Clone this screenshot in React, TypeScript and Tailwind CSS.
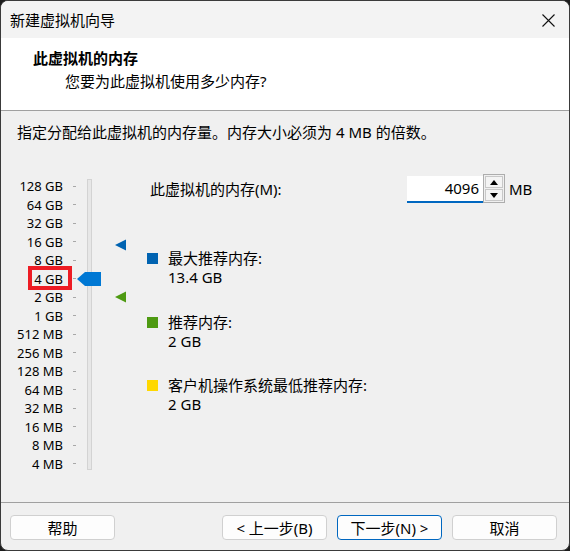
import React from "react";

const labels = [
  "128 GB", "64 GB", "32 GB", "16 GB", "8 GB", "4 GB", "2 GB", "1 GB",
  "512 MB", "256 MB", "128 MB", "64 MB", "32 MB", "16 MB", "8 MB", "4 MB",
];

function Btn({ children, primary }: { children: React.ReactNode; primary?: boolean }) {
  return (
    <div
      className={
        "w-[105px] h-[25px] rounded-[4px] bg-[#fdfdfd] flex items-center justify-center text-[15px] leading-[20px] text-black border " +
        (primary ? "border-[#0067c0]" : "border-[#d0d0d0]")
      }
    >
      {children}
    </div>
  );
}

function LegendItem({ color, title, value }: { color: string; title: string; value: string }) {
  return (
    <div className="flex flex-row">
      <div className="h-[19px] flex items-center">
        <div className={"w-[11px] h-[11px] " + color} />
      </div>
      <div className="ml-[10px] flex flex-col text-[15px] leading-[19px]">
        <span>{title}</span>
        <span>{value}</span>
      </div>
    </div>
  );
}

export default function App() {
  return (
    <div className="w-[570px] h-[551px] bg-[#1c1c1c] font-[family-name:'Noto_Sans','Noto_Sans_CJK_SC',sans-serif] text-black">
      <div className="w-full h-full rounded-[8px] border border-[#3a3a3a] overflow-hidden flex flex-col bg-[#f0f0f0]">
        {/* title bar */}
        <div className="h-[37px] bg-[#f3f3f3] flex items-center justify-between pl-[9px] pr-[14px]">
          <span className="text-[15px] leading-[20px] mt-[1px]">新建虚拟机向导</span>
          <svg width="13" height="13" viewBox="0 0 13 13" className="mt-[1px]">
            <path d="M0.5 0.5 L12.5 12.5 M12.5 0.5 L0.5 12.5" stroke="#111" strokeWidth="1.1" fill="none" />
          </svg>
        </div>
        {/* header */}
        <div className="h-[73px] bg-white border-b border-[#a0a0a0] flex flex-col pt-[10px]">
          <span className="pl-[32px] text-[15px] leading-[20px] font-bold">此虚拟机的内存</span>
          <span className="pl-[64px] mt-[3px] text-[15px] leading-[20px]">您要为此虚拟机使用多少内存?</span>
        </div>
        {/* content */}
        <div className="flex-1 flex flex-col">
          <span className="pl-[16px] pt-[11px] text-[15px] leading-[20px]">
            指定分配给此虚拟机的内存量。内存大小必须为 4 MB 的倍数。
          </span>
          <div className="flex flex-row mt-[32px]">
            {/* slider */}
            <div className="relative w-[146px] h-[296px] mt-[3px] flex flex-row">
              <div className="flex flex-col">
                {labels.map((l) => (
                  <div key={l} className="h-[18.5px] flex flex-row items-center">
                    <span className="w-[62px] text-right text-[13px] leading-[16px]">{l}</span>
                    <div className="ml-[10px] w-[3px] h-[1px] bg-[#a8a8a8]" />
                  </div>
                ))}
              </div>
              <div className="ml-[11px] mt-[2px] w-[5px] h-[291px] bg-[#e7e7e7] border border-[#d3d3d3]" />
              {/* thumb */}
              <svg className="absolute left-[76px] top-[95px]" width="24" height="14" viewBox="0 0 24 14">
                <polygon points="0,7 8,0 24,0 24,14 8,14" fill="#0078d4" />
              </svg>
              {/* max recommended marker */}
              <svg className="absolute left-[114px] top-[62px]" width="12" height="12" viewBox="0 0 12 12">
                <polygon points="0,6 11,0.5 11,11.5" fill="#0063b1" />
              </svg>
              {/* recommended marker */}
              <svg className="absolute left-[114px] top-[114px]" width="12" height="12" viewBox="0 0 12 12">
                <polygon points="0,6 11,0.5 11,11.5" fill="#4e9a12" />
              </svg>
              {/* red annotation box */}
              <div className="absolute left-[27px] top-[89px] w-[44px] h-[24px] border-[4px] border-[#ed1c24]" />
            </div>
            {/* right column */}
            <div className="flex flex-col">
              <div className="h-[29px] flex flex-row items-center">
                <span className="w-[260px] pl-[3px] text-[15px] leading-[20px]">此虚拟机的内存(M):</span>
                <div className="w-[76px] h-[27px] mt-[1px] bg-white border-b-2 border-[#0067c0] flex items-center justify-end pr-[4px] text-[15px] leading-[20px]">
                  4096
                </div>
                <div className="w-[22px] h-[29px] border border-[#adadad] bg-[#f0f0f0] flex flex-col p-[1px] gap-[1px]">
                  <div className="flex-1 border border-[#c8c8c8] bg-[#f4f4f4] flex items-center justify-center">
                    <svg width="8" height="5" viewBox="0 0 8 5"><polygon points="4,0 8,5 0,5" fill="#000" /></svg>
                  </div>
                  <div className="flex-1 border border-[#c8c8c8] bg-[#f4f4f4] flex items-center justify-center">
                    <svg width="8" height="5" viewBox="0 0 8 5"><polygon points="0,0 8,0 4,5" fill="#000" /></svg>
                  </div>
                </div>
                <span className="ml-[4px] text-[15px] leading-[20px]">MB</span>
              </div>
              <div className="mt-[46px] flex flex-col gap-[26px]">
                <LegendItem color="bg-[#0063b1]" title="最大推荐内存:" value="13.4 GB" />
                <LegendItem color="bg-[#4e9a12]" title="推荐内存:" value="2 GB" />
                <div className="-mt-[1px]">
                  <LegendItem color="bg-[#ffd800]" title="客户机操作系统最低推荐内存:" value="2 GB" />
                </div>
              </div>
            </div>
          </div>
        </div>
        {/* footer */}
        <div className="h-[48px] border-t border-[#a0a0a0] flex flex-row justify-between items-start pt-[12px] pl-[9px] pr-[12px]">
          <Btn>帮助</Btn>
          <div className="flex flex-row gap-[10px]">
            <Btn>&lt; 上一步(B)</Btn>
            <Btn primary>下一步(N) &gt;</Btn>
            <Btn>取消</Btn>
          </div>
        </div>
      </div>
    </div>
  );
}
